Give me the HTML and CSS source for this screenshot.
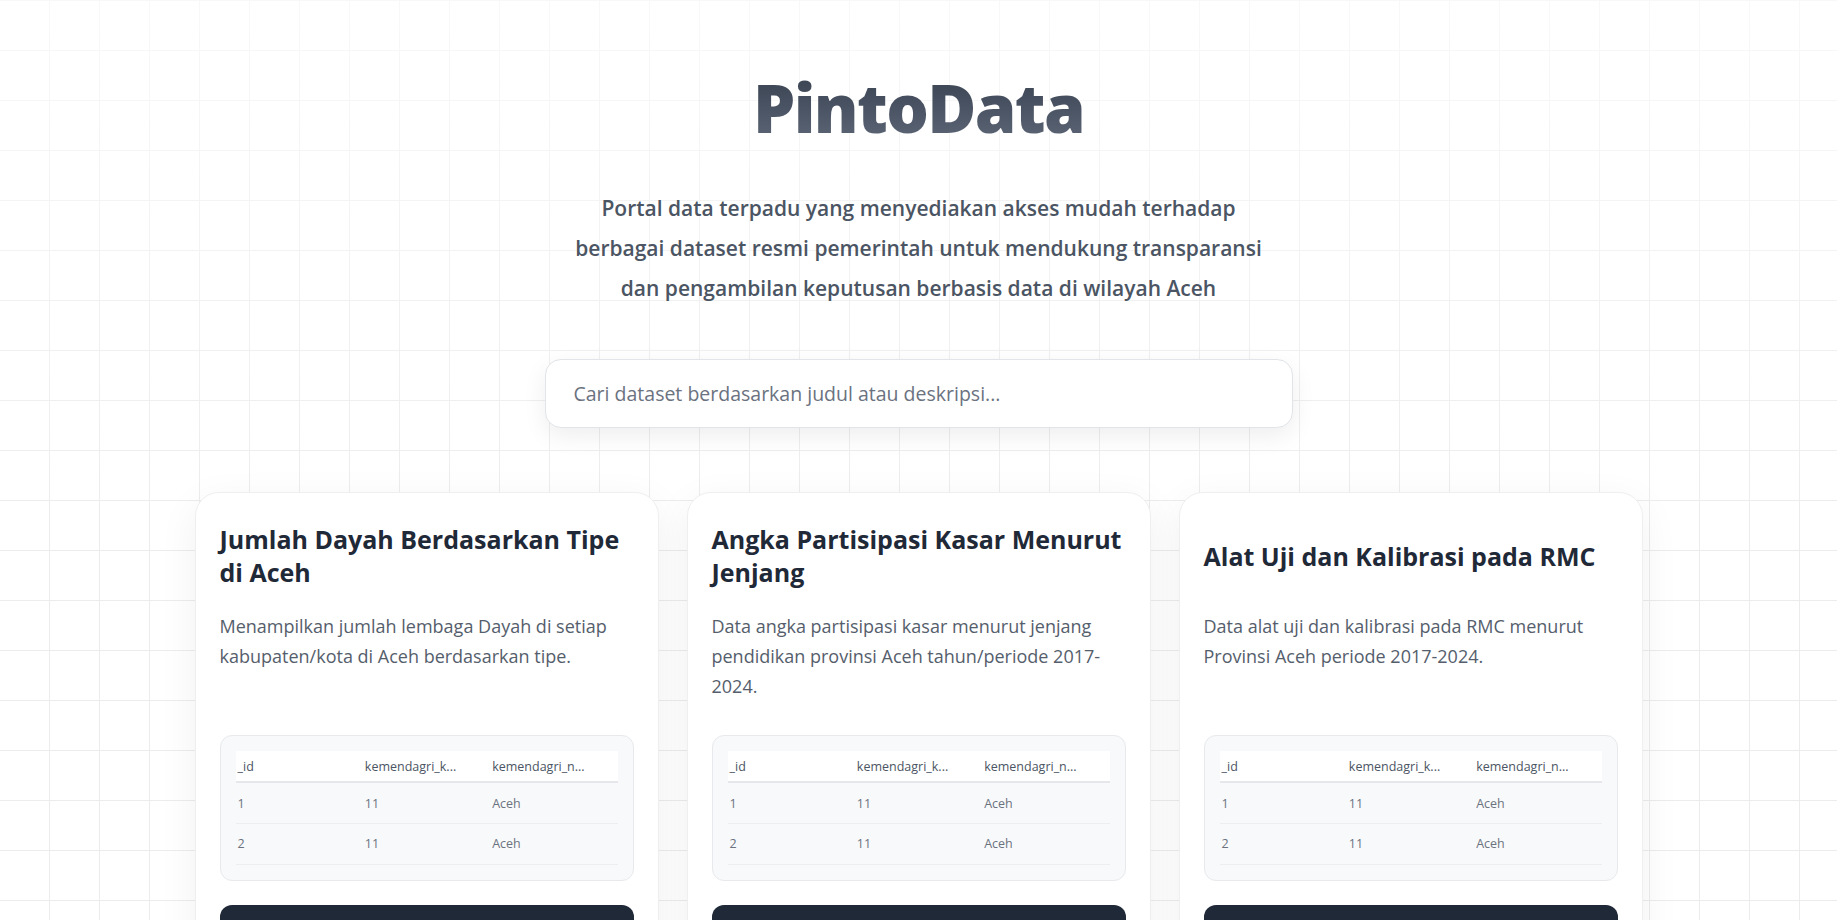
FILE: index.html
```html
<!DOCTYPE html>
<html lang="id">
<head>
<meta charset="utf-8">
<title>PintoData</title>
<link rel="stylesheet" href="styles.css">
</head>
<body>
<main class="page">
  <header class="hero">
    <h1 class="brand">PintoData</h1>
    <p class="tagline">Portal data terpadu yang menyediakan akses mudah terhadap berbagai dataset resmi pemerintah untuk mendukung transparansi dan pengambilan keputusan berbasis data di wilayah Aceh</p>
    <div class="search">
      <input class="search-input" type="text" placeholder="Cari dataset berdasarkan judul atau deskripsi...">
    </div>
  </header>

  <section class="cards">
    <article class="card">
      <h2 class="card-title">Jumlah Dayah Berdasarkan Tipe di Aceh</h2>
      <p class="card-desc">Menampilkan jumlah lembaga Dayah di setiap kabupaten/kota di Aceh berdasarkan tipe.</p>
      <div class="preview">
        <table class="preview-table">
          <thead><tr><th>_id</th><th>kemendagri_k...</th><th>kemendagri_n...</th></tr></thead>
          <tbody>
            <tr><td>1</td><td>11</td><td>Aceh</td></tr>
            <tr><td>2</td><td>11</td><td>Aceh</td></tr>
          </tbody>
        </table>
      </div>
      <button class="card-btn">Lihat Dataset</button>
    </article>

    <article class="card">
      <h2 class="card-title">Angka Partisipasi Kasar Menurut Jenjang</h2>
      <p class="card-desc">Data angka partisipasi kasar menurut jenjang pendidikan provinsi Aceh tahun/periode 2017-2024.</p>
      <div class="preview">
        <table class="preview-table">
          <thead><tr><th>_id</th><th>kemendagri_k...</th><th>kemendagri_n...</th></tr></thead>
          <tbody>
            <tr><td>1</td><td>11</td><td>Aceh</td></tr>
            <tr><td>2</td><td>11</td><td>Aceh</td></tr>
          </tbody>
        </table>
      </div>
      <button class="card-btn">Lihat Dataset</button>
    </article>

    <article class="card">
      <h2 class="card-title">Alat Uji dan Kalibrasi pada RMC</h2>
      <p class="card-desc">Data alat uji dan kalibrasi pada RMC menurut Provinsi Aceh periode 2017-2024.</p>
      <div class="preview">
        <table class="preview-table">
          <thead><tr><th>_id</th><th>kemendagri_k...</th><th>kemendagri_n...</th></tr></thead>
          <tbody>
            <tr><td>1</td><td>11</td><td>Aceh</td></tr>
            <tr><td>2</td><td>11</td><td>Aceh</td></tr>
          </tbody>
        </table>
      </div>
      <button class="card-btn">Lihat Dataset</button>
    </article>
  </section>
</main>
</body>
</html>
```

FILE: styles.css
```css
* { box-sizing: border-box; }

html, body { margin: 0; padding: 0; }

body {
  font-family: "Open Sans", "Noto Sans", "Liberation Sans", sans-serif;
  color: #1f2937;
  background-color: #ffffff;
  background-image:
    linear-gradient(to bottom, rgba(255,255,255,0.65) 0, rgba(255,255,255,0.15) 420px, rgba(255,255,255,0) 520px),
    linear-gradient(to bottom, #ececec 1px, transparent 1px),
    linear-gradient(to right, #ececec 1px, transparent 1px);
  background-size: 100% 100%, 50px 50px, 50px 50px;
  background-position: 0 0, 0 0, -1px 0;
  min-height: 100vh;
}

.page {
  padding-top: 67px;
}

.hero {
  display: flex;
  flex-direction: column;
  align-items: center;
  text-align: center;
}

.brand {
  margin: 0;
  font-family: "Open Sans", sans-serif;
  font-weight: 800;
  font-size: 67px;
  line-height: 1.2;
  letter-spacing: -0.025em;
  background: linear-gradient(to bottom, #363f4e, #5f6878);
  -webkit-background-clip: text;
  background-clip: text;
  color: transparent;
}

.tagline {
  margin: 41px 0 0;
  max-width: 712px;
  font-size: 21px;
  font-weight: 600;
  line-height: 40px;
  color: #4b5563;
}

.search {
  margin-top: 51px;
  width: 748px;
}

.search-input {
  width: 100%;
  height: 69px;
  padding: 0 28px;
  border: 1px solid #e1e4e8;
  border-radius: 16px;
  background: #ffffff;
  box-shadow: 0 8px 24px rgba(0, 0, 0, 0.07);
  font-family: "Open Sans", sans-serif;
  font-size: 19.5px;
  color: #1f2937;
  outline: none;
}

.search-input::placeholder {
  color: #6b7280;
}

.cards {
  max-width: 1448px;
  margin: 64px auto 0;
  display: grid;
  grid-template-columns: repeat(3, 1fr);
  gap: 28px;
}

.card {
  background: #ffffff;
  border: 1px solid #efefef;
  border-radius: 24px;
  padding: 30px 24px 24px;
  box-shadow: 0 10px 40px rgba(0, 0, 0, 0.06);
  display: flex;
  flex-direction: column;
}

.card-title {
  margin: 0;
  min-height: 66px;
  display: flex;
  align-items: center;
  font-size: 25px;
  font-weight: 700;
  line-height: 33px;
  color: #1f2937;
}

.card-desc {
  margin: 22px 0 0;
  min-height: 90px;
  font-size: 18px;
  line-height: 30px;
  color: #555e6c;
}

.preview {
  margin-top: 34px;
  background: #f8f9fa;
  border: 1px solid #e7e9ec;
  border-radius: 12px;
  padding: 15px;
}

.preview-table {
  width: 100%;
  border-collapse: collapse;
  table-layout: fixed;
  font-size: 12.5px;
}

.preview-table th {
  background: #ffffff;
  text-align: left;
  font-weight: 500;
  color: #4b5563;
  height: 31px;
  padding: 0 2px;
  border-bottom: 2px solid #e5e7eb;
}

.preview-table td {
  text-align: left;
  color: #6b7280;
  height: 41px;
  padding: 0 2px;
  border-bottom: 1px solid #eceef1;
}

.card-btn {
  margin-top: 24px;
  height: 60px;
  border: none;
  border-radius: 12px;
  background: #1f2937;
  color: #ffffff;
  font-family: "Open Sans", sans-serif;
  font-size: 16px;
  font-weight: 600;
}
```
